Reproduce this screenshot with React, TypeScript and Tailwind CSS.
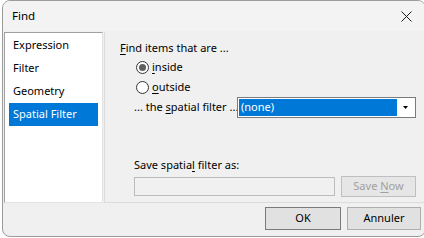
import React from "react";

const U = ({ c }: { c: string }) => (
  <span className="underline underline-offset-[2px] decoration-[1px]">{c}</span>
);

function Radio({ checked }: { checked?: boolean }) {
  return (
    <span className="w-[13px] h-[13px] rounded-full border border-[#333333] bg-white flex items-center justify-center shrink-0">
      {checked && <span className="w-[7px] h-[7px] rounded-full bg-[#5f5f5f]" />}
    </span>
  );
}

export default function App() {
  const items = ["Expression", "Filter", "Geometry", "Spatial Filter"];
  return (
    <div
      className="w-[424px] h-[238px] bg-white overflow-hidden text-[11px] text-black whitespace-nowrap"
      style={{ fontFamily: '"Noto Sans", "Liberation Sans", sans-serif' }}
    >
      <div className="ml-[2px] w-[424px] h-[237px] border border-[#9b9b9b] rounded-[8px] bg-[#f0f0f0] flex flex-col overflow-hidden">
        {/* title bar */}
        <div className="h-[30px] bg-[#f3f3f3] flex items-center justify-between pl-[9px] pr-[13px] shrink-0">
          <span className="leading-none text-[11.5px]">Find</span>
          <svg width="11" height="11" viewBox="0 0 11 11">
            <path d="M0.5 0.5 L10.5 10.5 M10.5 0.5 L0.5 10.5" stroke="#1a1a1a" strokeWidth="1" />
          </svg>
        </div>
        {/* body */}
        <div className="flex h-[172px] pt-[1px] shrink-0">
          <div className="ml-[1px] w-[99px] h-[171px] bg-white border-t border-l border-t-[#a0a0a0] border-l-[#a0a0a0] border-r border-b border-r-[#e3e3e3] border-b-[#e3e3e3] pt-[1px] px-[4px]">
            {items.map((t, i) => (
              <div
                key={t}
                className={
                  "h-[23px] flex items-center pl-[4px] " +
                  (i === 3 ? "bg-[#0078d7] text-white" : "")
                }
              >
                {t}
              </div>
            ))}
          </div>
          <div className="ml-[1px] flex-1 h-[171px] border-l border-b border-l-[#dcdcdc] border-b-[#dcdcdc] pl-[15px] pt-[8px]">
            <div className="h-[16px] flex items-center">
              <span>
                <U c="F" />ind items that are ...
              </span>
            </div>
            <div className="h-[20px] mt-[1px] flex items-center pl-[16px] gap-[3px]">
              <Radio checked />
              <span>
                <U c="i" />nside
              </span>
            </div>
            <div className="h-[20px] flex items-center pl-[16px] gap-[3px]">
              <Radio />
              <span>
                <U c="o" />utside
              </span>
            </div>
            <div className="h-[21px] flex items-center pl-[14px]">
              <span className="w-[103px]">
                ... the <U c="s" />patial filter ...
              </span>
              <div className="w-[179px] h-[21px] border border-[#7a7a7a] bg-white flex p-[1px]">
                <div className="flex-1 bg-[#0078d7] text-white flex items-center pl-[2px]">(none)</div>
                <div className="w-[17px] flex items-center justify-center">
                  <svg width="5" height="3" viewBox="0 0 5 3">
                    <path d="M0 0 L5 0 L2.5 3 Z" fill="#000" />
                  </svg>
                </div>
              </div>
            </div>
            <div className="h-[16px] mt-[39px] flex items-center pl-[14px]">
              <span>
                Save spatia<U c="l" /> filter as:
              </span>
            </div>
            <div className="flex items-center mt-[3px] pl-[14px]">
              <div className="w-[201px] h-[19px] border border-[#bcbcbc] bg-[#f0f0f0]" />
              <div className="ml-[6px] w-[75px] h-[21px] border border-[#bfbfbf] bg-[#e6e6e6] text-[#a0a0a0] flex items-center justify-center">
                <span>
                  Save <U c="N" />ow
                </span>
              </div>
            </div>
          </div>
        </div>
        {/* footer */}
        <div className="flex justify-end gap-[6px] pr-[4px] pt-[4px]">
          <div className="w-[76px] h-[23px] border border-[#7a7a7a] bg-[#e1e1e1] flex items-center justify-center">
            OK
          </div>
          <div className="w-[74px] h-[23px] border border-[#adadad] bg-[#e1e1e1] flex items-center justify-center">
            Annuler
          </div>
        </div>
      </div>
    </div>
  );
}
